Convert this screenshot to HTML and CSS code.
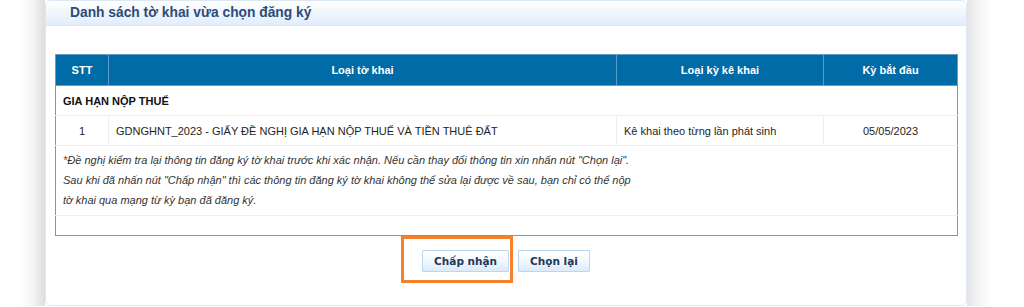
FILE: index.html
```html
<!DOCTYPE html>
<html lang="vi">
<head>
<meta charset="utf-8">
<title>Danh sách tờ khai vừa chọn đăng ký</title>
<link rel="stylesheet" href="styles.css">
</head>
<body>
<div class="page">
  <div class="shade-l"></div>
  <div class="panel">
    <div class="panel-head"><h2 class="panel-title">Danh sách tờ khai vừa chọn đăng ký</h2></div>
    <div class="panel-body">
      <table class="grid">
        <colgroup>
          <col class="c-stt"><col class="c-loai"><col class="c-ky"><col class="c-bd">
        </colgroup>
        <thead>
          <tr><th>STT</th><th>Loại tờ khai</th><th>Loại kỳ kê khai</th><th>Kỳ bắt đầu</th></tr>
        </thead>
        <tbody>
          <tr class="group"><td colspan="4">GIA HẠN NỘP THUẾ</td></tr>
          <tr class="item">
            <td class="center">1</td>
            <td>GDNGHNT_2023 - GIẤY ĐỀ NGHỊ GIA HẠN NỘP THUẾ VÀ TIỀN THUÊ ĐẤT</td>
            <td>Kê khai theo từng lần phát sinh</td>
            <td class="center">05/05/2023</td>
          </tr>
          <tr class="note">
            <td colspan="4"><span class="req">*</span>Đề nghị kiểm tra lại thông tin đăng ký tờ khai trước khi xác nhận. Nếu cần thay đổi thông tin xin nhấn nút "Chọn lại".<br>Sau khi đã nhấn nút "Chấp nhận" thì các thông tin đăng ký tờ khai không thể sửa lại được về sau, bạn chỉ có thể nộp<br>tờ khai qua mạng từ kỳ bạn đã đăng ký.</td>
          </tr>
          <tr class="empty"><td colspan="4"></td></tr>
        </tbody>
      </table>
      <div class="actions">
        <span class="focus-wrap"><button class="btn" type="button">Chấp nhận</button><span class="focus-ring"></span></span>
        <button class="btn" type="button">Chọn lại</button>
      </div>
    </div>
  </div>
  <div class="shade-r"></div>
</div>
</body>
</html>
```

FILE: styles.css
```css
html, body {
  margin: 0;
  padding: 0;
  background: #ffffff;
}
body {
  font-family: "Liberation Sans", Arial, sans-serif;
  color: #222;
}
.page {
  display: flex;
  align-items: stretch;
  height: 306px;
  padding-left: 20px;
}
.shade-l {
  width: 25px;
  background: linear-gradient(to right, #ffffff 0%, #f4f4f4 50%, #dedede 100%);
}
.shade-r {
  width: 24px;
  background: linear-gradient(to right, #e4e4e4 0%, #f3f3f3 45%, #ffffff 100%);
}
.panel {
  width: 922px;
  box-sizing: border-box;
  border: 1px solid #dde8f5;
  border-radius: 6px;
  background: #ffffff;
  display: flex;
  flex-direction: column;
}
.panel-head {
  height: 24px;
  border-bottom: 1px solid #dbe7f6;
  border-radius: 6px 6px 0 0;
  background: linear-gradient(to bottom, #ffffff 0%, #eef5fd 55%, #e1edfb 100%);
  padding-left: 24px;
}
.panel-title {
  margin: 0;
  font-size: 13.8px;
  line-height: 24px;
  font-weight: bold;
  color: #2c4c77;
}
.panel-body {
  padding: 28px 9px 0 9px;
}
.grid {
  width: 902px;
  border-collapse: collapse;
  border: 1px solid #6a9dc0;
  font-size: 11px;
  table-layout: fixed;
}
.c-stt { width: 53px; }
.c-loai { width: 508px; }
.c-ky { width: 207px; }
.c-bd { width: 134px; }
.grid th {
  background: #006ba6;
  color: #ffffff;
  font-weight: bold;
  height: 30px;
  padding: 0;
  border-left: 1px solid #5b9ccb;
  border-bottom: 1px solid #5b9ccb;
  text-align: center;
}
.grid th:first-child { border-left: none; }
.grid td {
  padding: 0 7px;
  border-top: 1px solid #eeeeee;
  border-left: 1px solid #eeeeee;
  color: #1e1e1e;
}
.grid td:first-child { border-left: none; }
.grid td.center { text-align: center; }
.group td {
  height: 29px;
  font-weight: bold;
  color: #111;
  border-top: none;
}
.item td { height: 29px; }
.note td {
  height: 69px;
  box-sizing: border-box;
  padding: 4px 7px 5px 7px;
  font-style: italic;
  line-height: 20px;
  color: #333;
  vertical-align: top;
}
.req { color: #e00000; }
.empty td { height: 19px; }
.actions {
  display: flex;
  justify-content: center;
  gap: 9px;
  margin-top: 14px;
}
.focus-wrap {
  position: relative;
  display: inline-flex;
}
.focus-ring {
  position: absolute;
  left: -21px;
  right: -4px;
  top: -14px;
  bottom: -11px;
  border: 3px solid #f7812b;
  pointer-events: none;
}
.btn {
  font-family: "DejaVu Sans", Verdana, sans-serif;
  font-weight: bold;
  font-size: 10.5px;
  color: #1d3859;
  height: 22px;
  padding: 0 11px;
  border: 1px solid #b9d6f2;
  border-radius: 1px;
  background: linear-gradient(to bottom, #ffffff 0%, #f3f8fe 50%, #dbeafa 100%);
  cursor: pointer;
}
```
